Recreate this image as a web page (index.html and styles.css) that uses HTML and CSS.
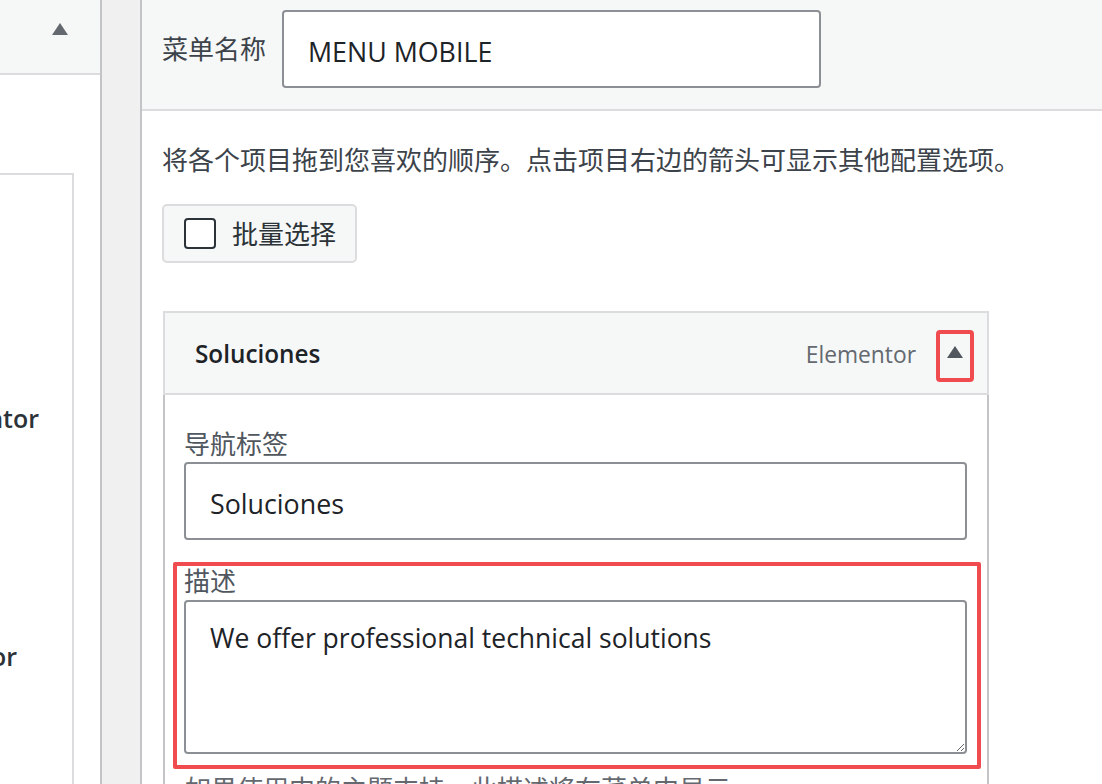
FILE: index.html
```html
<!DOCTYPE html>
<html lang="zh-CN">
<head>
<meta charset="utf-8">
<title>菜单</title>
<link rel="stylesheet" href="styles.css">
</head>
<body>
<div class="screen">
  <aside class="sidebar">
    <div class="sidebar-head">
      <svg class="sidebar-arrow" width="16" height="12" viewBox="0 0 16 12"><polygon points="8,0 16,12 0,12" fill="#646970"/></svg>
    </div>
    <div class="sidebar-body">
      <div class="sidebar-box">
        <div class="clip-line line-1"><span>Elementor</span></div>
        <div class="clip-line line-2"><span>Elementor</span></div>
      </div>
    </div>
  </aside>
  <div class="gutter"></div>
  <main class="editor">
    <div class="name-bar">
      <label class="name-label">菜单名称</label>
      <input class="text-input name-input" type="text" value="MENU MOBILE">
    </div>
    <div class="editor-body">
      <p class="drag-hint">将各个项目拖到您喜欢的顺序。点击项目右边的箭头可显示其他配置选项。</p>
      <label class="bulk-btn"><span class="checkbox"></span><span class="bulk-text">批量选择</span></label>
      <div class="menu-item">
        <div class="item-bar">
          <span class="item-title">Soluciones</span>
          <span class="item-type">Elementor</span>
          <span class="item-toggle">
            <svg width="16" height="12" viewBox="0 0 16 12"><polygon points="8,0 16,12 0,12" fill="#50575e"/></svg>
          </span>
        </div>
        <div class="item-settings">
          <div class="field">
            <label class="field-label">导航标签</label>
            <input class="text-input" type="text" value="Soluciones">
          </div>
          <div class="field field-desc">
            <label class="field-label">描述</label>
            <textarea class="text-area">We offer professional technical solutions</textarea>
          </div>
          <p class="field-help">如果使用中的主题支持，此描述将在菜单中显示。</p>
        </div>
      </div>
    </div>
  </main>
</div>
</body>
</html>
```

FILE: styles.css
```css
* { box-sizing: border-box; }

html, body {
  margin: 0;
  padding: 0;
  width: 1102px;
  height: 784px;
  overflow: hidden;
  background: #f0f0f1;
  font-family: "Open Sans", "Noto Sans CJK SC", sans-serif;
  color: #3c434a;
}

.screen {
  display: flex;
  height: 784px;
}

/* left column */
.sidebar {
  width: 102px;
  flex: none;
  display: flex;
  flex-direction: column;
  background: #fff;
  border-right: 2px solid #c3c4c7;
  overflow: hidden;
}

.sidebar-head {
  height: 75px;
  flex: none;
  background: #f6f7f7;
  border-bottom: 2px solid #dcdcde;
  padding: 23px 0 0 52px;
}

.sidebar-arrow { display: block; }

.sidebar-body {
  flex: 1;
  display: flex;
  flex-direction: column;
  padding-top: 98px;
}

.sidebar-box {
  flex: 1;
  width: 74px;
  border-top: 2px solid #dcdcde;
  border-right: 2px solid #dcdcde;
}

.clip-line {
  display: flex;
  justify-content: flex-end;
  white-space: nowrap;
  font-size: 25px;
  font-weight: 600;
  line-height: 36px;
  color: #2c3338;
}

.line-1 { width: 39px; margin-top: 225px; }
.line-2 { width: 17px; margin-top: 202px; }

.gutter {
  width: 38px;
  flex: none;
  background: #f0f0f1;
}

/* main editor */
.editor {
  flex: 1;
  background: #fff;
  border-left: 2px solid #c3c4c7;
  overflow: hidden;
}

.name-bar {
  height: 111px;
  background: #f6f7f7;
  border-bottom: 2px solid #dcdcde;
  padding: 10px 0 0 20px;
  display: flex;
  align-items: center;
  align-content: flex-start;
  flex-wrap: wrap;
}

.name-label {
  font-size: 26px;
  line-height: 78px;
  color: #3c434a;
  margin-right: 16px;
}

.text-input {
  display: block;
  height: 78px;
  border: 2px solid #8c8f94;
  border-radius: 4px;
  background: #fff;
  padding: 4px 24px 0;
  font-family: "Open Sans", "Noto Sans CJK SC", sans-serif;
  font-size: 26.8px;
  color: #1d2327;
  outline: none;
}

.name-input { width: 539px; }

.editor-body {
  padding: 29px 0 0 20px;
}

.drag-hint {
  margin: 0;
  font-size: 26px;
  line-height: 40px;
  color: #3c434a;
}

.bulk-btn {
  margin-top: 24px;
  display: flex;
  align-items: center;
  width: 195px;
  height: 59px;
  padding-left: 20px;
  background: #f6f7f7;
  border: 2px solid #dcdcde;
  border-radius: 5px;
}

.checkbox {
  width: 32px;
  height: 31px;
  border: 2px solid #2c3338;
  border-radius: 4px;
  background: #fff;
  flex: none;
}

.bulk-text {
  margin-left: 16px;
  font-size: 26px;
  line-height: 40px;
  color: #2c3338;
}

.menu-item {
  margin: 48px 0 0 1px;
  width: 826px;
}

.item-bar {
  height: 84px;
  display: flex;
  align-items: center;
  background: #f6f7f7;
  border: 2px solid #dcdcde;
  padding: 0 13px 0 30px;
}

.item-title {
  flex: 1;
  font-size: 24.3px;
  font-weight: 600;
  color: #1d2327;
}

.item-type {
  font-size: 22.8px;
  color: #646970;
  margin-right: 20px;
  padding-top: 2px;
}

.item-toggle {
  width: 38px;
  height: 52px;
  margin-top: 6px;
  border: 4px solid #f04c4f;
  border-radius: 4px;
  display: flex;
  justify-content: center;
  align-items: flex-start;
  padding-top: 12px;
}

.item-toggle svg { display: block; }

.item-settings {
  background: #fff;
  border: 2px solid #c3c4c7;
  border-top: none;
  padding: 31px 20px 40px 19px;
}

.field-label {
  display: block;
  font-size: 26px;
  line-height: 36px;
  color: #50575e;
}

.field .text-input { width: 100%; }

.field-desc {
  position: relative;
  margin-top: 22px;
}

.field-desc .field-label { line-height: 38px; }

.field-desc::after {
  content: "";
  position: absolute;
  top: 0;
  left: -11px;
  right: -14px;
  bottom: -15px;
  border: 4px solid #f04c4f;
  border-radius: 2px;
  pointer-events: none;
}

.text-area {
  display: block;
  width: 100%;
  height: 154px;
  border: 2px solid #8c8f94;
  border-radius: 4px;
  padding: 16px 24px;
  font-family: "Open Sans", "Noto Sans CJK SC", sans-serif;
  font-size: 26.5px;
  line-height: 40px;
  color: #1d2327;
  resize: vertical;
  outline: none;
}

.field-help {
  margin: 16px 0 0 1px;
  font-size: 26px;
  line-height: 38px;
  color: #646970;
}
```
